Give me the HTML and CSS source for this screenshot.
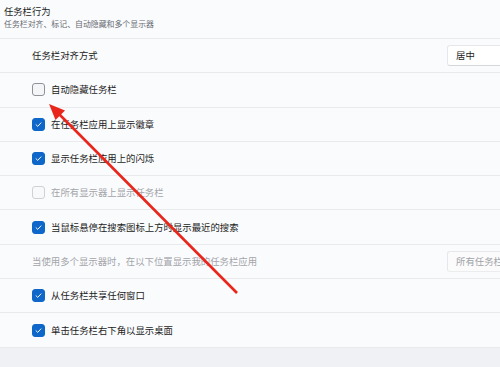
FILE: index.html
```html
<!DOCTYPE html>
<html lang="zh-CN">
<head>
<meta charset="utf-8">
<link rel="stylesheet" href="styles.css">
</head>
<body>
<div class="page">
  <div class="header">
    <div class="title">任务栏行为</div>
    <div class="subtitle">任务栏对齐、标记、自动隐藏和多个显示器</div>
  </div>
  <div class="row">
    <span class="label">任务栏对齐方式</span>
    <div class="select">居中</div>
  </div>
  <div class="row">
    <span class="box"></span><span class="label">自动隐藏任务栏</span>
  </div>
  <div class="row">
    <span class="box checked"><svg viewBox="0 0 13 13"><path d="M3.6 6.8 L5.6 8.7 L9.4 4.6" /></svg></span><span class="label">在任务栏应用上显示徽章</span>
  </div>
  <div class="row">
    <span class="box checked"><svg viewBox="0 0 13 13"><path d="M3.6 6.8 L5.6 8.7 L9.4 4.6" /></svg></span><span class="label">显示任务栏应用上的闪烁</span>
  </div>
  <div class="row">
    <span class="box disabled"></span><span class="label muted">在所有显示器上显示任务栏</span>
  </div>
  <div class="row">
    <span class="box checked"><svg viewBox="0 0 13 13"><path d="M3.6 6.8 L5.6 8.7 L9.4 4.6" /></svg></span><span class="label">当鼠标悬停在搜索图标上方时显示最近的搜索</span>
  </div>
  <div class="row">
    <span class="label muted">当使用多个显示器时，在以下位置显示我的任务栏应用</span>
    <div class="select muted-select">所有任务栏</div>
  </div>
  <div class="row">
    <span class="box checked"><svg viewBox="0 0 13 13"><path d="M3.6 6.8 L5.6 8.7 L9.4 4.6" /></svg></span><span class="label">从任务栏共享任何窗口</span>
  </div>
  <div class="row">
    <span class="box checked"><svg viewBox="0 0 13 13"><path d="M3.6 6.8 L5.6 8.7 L9.4 4.6" /></svg></span><span class="label">单击任务栏右下角以显示桌面</span>
  </div>
  <div class="footer"></div>
  <svg class="arrow" viewBox="0 0 500 367" width="500" height="367">
    <line x1="237" y1="293" x2="58" y2="113" />
    <polygon points="49,104 65,110.5 55.5,120" />
  </svg>
</div>
</body>
</html>
```

FILE: styles.css
```css
html, body {
  margin: 0;
  padding: 0;
}
body {
  width: 500px;
  height: 367px;
  overflow: hidden;
  background: #eff1f5;
}
.page {
  position: relative;
  width: 500px;
  height: 367px;
  font-family: "Noto Sans CJK SC", "Noto Sans", sans-serif;
  color: #1b1b1b;
  background: #eff1f5;
}
.header {
  height: 38px;
  padding-left: 4px;
  background: #fafbfd;
  box-sizing: border-box;
  padding-top: 5px;
}
.title {
  font-size: 9.3px;
  line-height: 13px;
  color: #1b1b1b;
}
.subtitle {
  font-size: 7.9px;
  line-height: 11px;
  color: #666a70;
}
.row {
  height: 34.3px;
  box-sizing: border-box;
  border-top: 1.6px solid #e8eaee;
  background: #fafbfd;
  display: flex;
  align-items: center;
  padding-left: 32px;
}
.label {
  font-size: 9.4px;
  line-height: 13px;
  white-space: nowrap;
}
.label.muted {
  color: #a3a5a9;
}
.box {
  width: 13px;
  height: 13px;
  box-sizing: border-box;
  border: 1px solid #8f9297;
  border-radius: 3px;
  background: #f4f5f7;
  margin-right: 6px;
  flex: none;
  display: flex;
}
.box.checked {
  background: #0f68c9;
  border-color: #0f68c9;
}
.box.checked svg {
  width: 11px;
  height: 11px;
}
.box svg path {
  fill: none;
  stroke: #ffffff;
  stroke-width: 1.1;
  stroke-linecap: round;
  stroke-linejoin: round;
}
.box.disabled {
  border-color: #cfd1d4;
  background: #f8f9fb;
}
.select {
  margin-left: auto;
  width: 53px;
  height: 21px;
  box-sizing: border-box;
  background: #ffffff;
  border: 1px solid #e6e7ea;
  border-right: none;
  border-bottom-color: #d5d7da;
  border-radius: 3px 0 0 3px;
  font-size: 9.4px;
  line-height: 19px;
  padding-left: 8px;
  white-space: nowrap;
  overflow: hidden;
}
.muted-select {
  color: #9fa2a6;
  background: #fbfbfc;
  border-bottom-color: #ebecee;
}
.footer {
  border-top: 1.6px solid #e8eaee;
  height: 20px;
}
.arrow {
  position: absolute;
  left: 0;
  top: 0;
  pointer-events: none;
}
.arrow line {
  stroke: #e9261b;
  stroke-width: 2.6;
}
.arrow polygon {
  fill: #e9261b;
}
```
